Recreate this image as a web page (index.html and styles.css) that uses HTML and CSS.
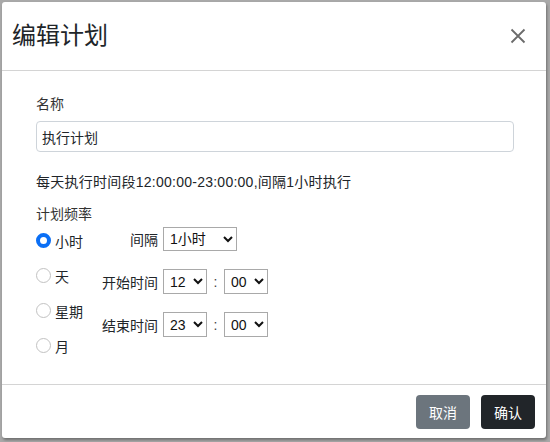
FILE: index.html
```html
<!DOCTYPE html>
<html lang="zh-CN">
<head>
    <meta charset="UTF-8">
    <meta name="viewport" content="width=device-width, initial-scale=1.0">
    <title>编辑计划</title>
    <link rel="stylesheet" href="styles.css">
</head>
<body>

<div class="modal">
    <div class="modal-header">
        <h2 class="modal-title">编辑计划</h2>
        <button class="close" aria-label="关闭">
            <svg width="16" height="16" viewBox="0 0 16 16">
                <path d="M1.5 1.5 L14.5 14.5 M14.5 1.5 L1.5 14.5" stroke="#6b6b6b" stroke-width="1.8" fill="none"/>
            </svg>
        </button>
    </div>

    <div class="modal-body">
        <label class="field-label" for="name">名称</label>
        <input class="input" id="name" type="text" value="执行计划">

        <p class="summary">每天执行时间段12:00:00-23:00:00,间隔1小时执行</p>

        <div class="field-label freq-label">计划频率</div>
        <div class="freq">
            <div class="radios">
                <label class="radio"><input type="radio" name="freq" checked><span>小时</span></label>
                <label class="radio"><input type="radio" name="freq"><span>天</span></label>
                <label class="radio"><input type="radio" name="freq"><span>星期</span></label>
                <label class="radio"><input type="radio" name="freq"><span>月</span></label>
            </div>
            <div class="settings">
                <span class="set-label">间隔</span>
                <div class="set-ctrl">
                    <select class="sel sel-wide">
                        <option>1小时</option>
                        <option>2小时</option>
                    </select>
                </div>

                <span class="set-label">开始时间</span>
                <div class="set-ctrl">
                    <select class="sel"><option>12</option></select>
                    <span class="colon">:</span>
                    <select class="sel"><option>00</option></select>
                </div>

                <span class="set-label">结束时间</span>
                <div class="set-ctrl">
                    <select class="sel"><option>23</option></select>
                    <span class="colon">:</span>
                    <select class="sel"><option>00</option></select>
                </div>
            </div>
        </div>
    </div>

    <div class="modal-footer">
        <button class="btn btn-secondary">取消</button>
        <button class="btn btn-dark">确认</button>
    </div>
</div>

</body>
</html>
```

FILE: styles.css
```css
body {
    margin: 0;
    padding: 2px 4px 4px 2px;
    background-color: #a9a9a9;
    font-family: "Liberation Sans", "Noto Sans CJK SC", sans-serif;
    font-size: 14px;
    color: #212529;
}
.modal {
    height: 436px;
    background-color: #fff;
    border-radius: 3px;
    box-shadow: 1px 2px 3px rgba(0, 0, 0, 0.35);
    display: flex;
    flex-direction: column;
}
.modal-header {
    height: 68px;
    padding: 0 20px 0 10px;
    display: flex;
    align-items: center;
    justify-content: space-between;
    border-bottom: 1px solid #d4d4d4;
}
.modal-title {
    margin: 0;
    font-size: 24px;
    font-weight: normal;
    line-height: 36px;
    color: #212529;
}
.close {
    background: none;
    border: none;
    padding: 0;
    width: 16px;
    height: 16px;
    cursor: pointer;
}
.close svg {
    display: block;
}
.modal-body {
    flex: 1;
    padding: 23px 32px 0 34px;
}
.field-label {
    display: block;
    line-height: 20px;
    color: #333;
}
.input {
    display: block;
    box-sizing: border-box;
    width: 100%;
    height: 31px;
    margin-top: 7px;
    padding: 0 5px;
    border: 1px solid #ced4da;
    border-radius: 4px;
    font-family: inherit;
    font-size: 14px;
    color: #212529;
}
.summary {
    margin: 19px 0 0;
    line-height: 22px;
    letter-spacing: 0.25px;
    color: #212529;
}
.freq-label {
    margin-top: 12px;
    line-height: 18px;
}
.freq {
    display: flex;
}
.radios {
    width: 64px;
    display: flex;
    flex-direction: column;
}
.radio {
    height: 35px;
    display: flex;
    align-items: center;
    gap: 4px;
    cursor: pointer;
}
.radio input {
    appearance: none;
    margin: 0;
    width: 15px;
    height: 15px;
    box-sizing: border-box;
    border: 1px solid #c2c2c2;
    border-radius: 50%;
    background: #fff;
}
.radio input:checked {
    border: 4px solid #0b6ff5;
}
.settings {
    display: grid;
    grid-template-columns: 58px auto;
    column-gap: 5px;
    row-gap: 18px;
    align-items: center;
    align-content: start;
    padding-top: 4px;
}
.set-label {
    text-align: right;
    white-space: nowrap;
}
.set-ctrl {
    display: flex;
    align-items: center;
}
.sel {
    height: 25px;
    width: 44px;
    box-sizing: border-box;
    border: 1px solid #a9a9a9;
    border-radius: 0;
    background-color: #fff;
    font-family: inherit;
    font-size: 14px;
    color: #111;
    padding: 0 0 0 2px;
}
.sel-wide {
    width: 74px;
    height: 24px;
}
.colon {
    width: 17px;
    text-align: center;
    color: #444;
}
.modal-footer {
    height: 54px;
    border-top: 1px solid #d4d4d4;
    box-sizing: border-box;
    padding: 0 11px 0 0;
    display: flex;
    align-items: center;
    justify-content: flex-end;
    gap: 11px;
}
.btn {
    height: 34px;
    padding: 0 13px;
    border: none;
    border-radius: 4px;
    font-family: inherit;
    font-size: 14px;
    color: #fff;
    cursor: pointer;
}
.btn-secondary {
    background-color: #6c757d;
}
.btn-dark {
    background-color: #212529;
}
```
